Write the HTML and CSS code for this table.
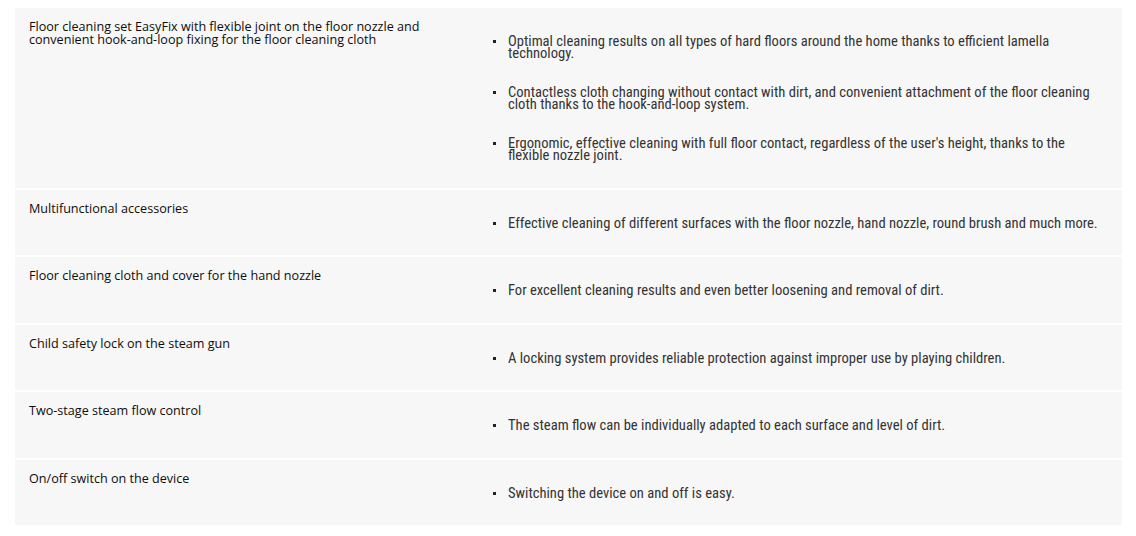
FILE: index.html
```html
<!DOCTYPE html>
<html>
<head>
<meta charset="utf-8">
<link rel="stylesheet" href="styles.css">
</head>
<body>
<div class="specs">
  <div class="row">
    <div class="name">Floor cleaning set EasyFix with flexible joint on the floor nozzle and convenient hook-and-loop fixing for the floor cleaning cloth</div>
    <ul class="benefits">
      <li>Optimal cleaning results on all types of hard floors around the home thanks to efficient lamella technology.</li>
      <li>Contactless cloth changing without contact with dirt, and convenient attachment of the floor cleaning cloth thanks to the hook-and-loop system.</li>
      <li>Ergonomic, effective cleaning with full floor contact, regardless of the user's height, thanks to the flexible nozzle joint.</li>
    </ul>
  </div>
  <div class="row">
    <div class="name">Multifunctional accessories</div>
    <ul class="benefits">
      <li>Effective cleaning of different surfaces with the floor nozzle, hand nozzle, round brush and much more.</li>
    </ul>
  </div>
  <div class="row">
    <div class="name">Floor cleaning cloth and cover for the hand nozzle</div>
    <ul class="benefits">
      <li>For excellent cleaning results and even better loosening and removal of dirt.</li>
    </ul>
  </div>
  <div class="row">
    <div class="name">Child safety lock on the steam gun</div>
    <ul class="benefits">
      <li>A locking system provides reliable protection against improper use by playing children.</li>
    </ul>
  </div>
  <div class="row">
    <div class="name">Two-stage steam flow control</div>
    <ul class="benefits">
      <li>The steam flow can be individually adapted to each surface and level of dirt.</li>
    </ul>
  </div>
  <div class="row">
    <div class="name">On/off switch on the device</div>
    <ul class="benefits">
      <li>Switching the device on and off is easy.</li>
    </ul>
  </div>
</div>
</body>
</html>
```
FILE: styles.css
```css
html, body {
  margin: 0;
  padding: 0;
  background: #ffffff;
}
body {
  padding: 8px 14px 0 15px;
  color: #222;
}
.specs {
  display: flex;
  flex-direction: column;
  gap: 2px;
  width: 1107px;
}
.row {
  display: grid;
  grid-template-columns: 465px 1fr;
  background: #f7f7f7;
}
.name {
  font-family: "Open Sans", sans-serif;
  font-size: 12.6px;
  line-height: 13px;
  padding: 12px 31px 0 14px;
  color: #0d0d0d;
}
.benefits {
  font-family: "Liberation Sans Narrow", "Roboto Condensed", "Liberation Sans", sans-serif;
  font-size: 14.6px;
  line-height: 12px;
  color: #333;
  margin: 0;
  padding: 27px 16px 26.5px 0;
  list-style: none;
  align-self: center;
}
.benefits li {
  position: relative;
  padding-left: 28px;
}
.benefits li + li {
  margin-top: 27px;
}
.benefits li::before {
  content: "";
  position: absolute;
  left: 13px;
  top: 5px;
  width: 3px;
  height: 3px;
  background: #222;
}
```
